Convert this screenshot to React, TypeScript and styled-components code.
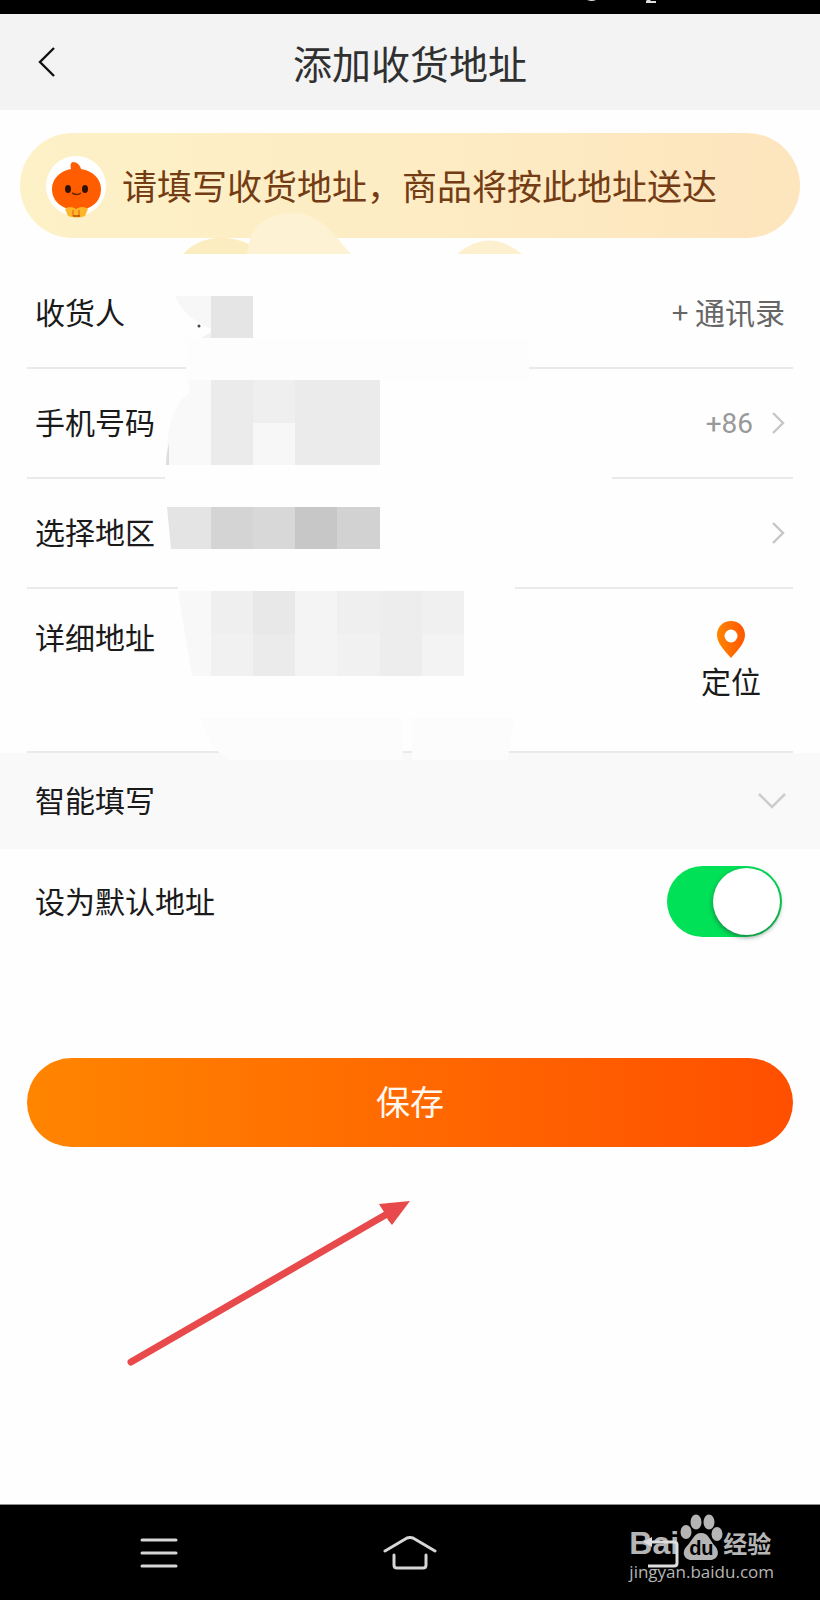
import React, { useState } from "react";
import styled, { createGlobalStyle } from "styled-components";

const GlobalStyle = createGlobalStyle`
  *, *::before, *::after { box-sizing: border-box; }
  body {
    margin: 0;
    background: #fefefe;
    color: #1a1a1a;
    font-family: "Noto Sans CJK SC", "Liberation Sans", sans-serif;
  }
  button, input { font: inherit; color: inherit; }
  svg { display: block; }
`;

const Screen = styled.div`
  display: flex;
  flex-direction: column;
  min-height: 100vh;
`;

const StatusBar = styled.div`
  display: flex;
  justify-content: flex-end;
  height: 14px;
  padding-right: 162px;
  background: #000;
`;

const Header = styled.header`
  display: grid;
  grid-template-columns: 94px 1fr 94px;
  align-items: center;
  height: 96px;
  background: #f3f3f3;
`;

const BackButton = styled.button`
  display: grid;
  place-items: center;
  height: 96px;
  padding: 0;
  border: 0;
  background: none;
`;

const Title = styled.h1`
  margin: 0;
  font-size: 39px;
  font-weight: 400;
  line-height: 56px;
  color: #303030;
  text-align: center;
  white-space: nowrap;
`;

const Main = styled.main`
  flex: 1;
`;

const Banner = styled.div`
  position: relative;
  display: flex;
  align-items: center;
  gap: 16px;
  height: 105px;
  margin: 23px 20px 0;
  padding-left: 26px;
  border-radius: 53px;
  background: linear-gradient(90deg, #fdf1c7, #fdecc4 50%, #fde5be);
`;

const BannerText = styled.p`
  position: relative;
  z-index: 1;
  margin: 0;
  padding-bottom: 2px;
  font-size: 35px;
  line-height: 50px;
  color: #743c14;
  white-space: nowrap;
`;

const Clouds = styled.svg`
  position: absolute;
  left: 160px;
  top: 78px;
`;

const Form = styled.form`
  position: relative;
  margin-top: 21px;
`;

const Row = styled.div<{ $tall?: boolean }>`
  display: flex;
  align-items: ${(p) => (p.$tall ? "flex-start" : "center")};
  height: ${(p) => (p.$tall ? 164 : 110)}px;
  margin: 0 27px;
  padding: ${(p) => (p.$tall ? "25px" : "0")} 8px 0;
  border-bottom: 2px solid #eaeaea;
`;

const Label = styled.label`
  padding-bottom: 4px;
  font-size: 30px;
  line-height: 44px;
  white-space: nowrap;
`;

const Field = styled.input`
  flex: 1;
  min-width: 0;
  height: 44px;
  margin-left: 16px;
  padding: 0;
  border: 0;
  outline: 0;
  background: transparent;
  font-size: 30px;
`;

const RowAction = styled.button<{ $raised?: boolean; $tone?: string }>`
  display: flex;
  align-items: center;
  gap: 18px;
  padding: 0 0 ${(p) => (p.$raised ? 4 : 0)}px;
  border: 0;
  background: none;
  color: ${(p) => p.$tone ?? "#666"};
  font-size: 30px;
  line-height: 44px;
  white-space: nowrap;
`;

const DialCode = styled.span`
  padding-top: 2px;
  font-family: Roboto, "Liberation Sans", sans-serif;
  font-size: 28px;
`;

const LocateButton = styled.button`
  display: flex;
  flex-direction: column;
  align-items: center;
  margin-right: 24px;
  padding: 7px 0 0;
  border: 0;
  background: none;
  font-size: 30px;
  line-height: 44px;
`;

const Mosaic = styled.svg`
  position: absolute;
  left: 0;
  top: 0;
  pointer-events: none;
`;

const SmartFill = styled.button`
  display: flex;
  align-items: center;
  justify-content: space-between;
  width: 100%;
  height: 96px;
  padding: 0 34px 0 35px;
  border: 0;
  background: #f9f9f9;
  font-size: 30px;
  line-height: 44px;
`;

const SmartFillText = styled.span`
  padding-bottom: 4px;
`;

const DefaultRow = styled.div`
  display: flex;
  align-items: center;
  justify-content: space-between;
  height: 105px;
  padding: 0 38px 0 35px;
`;

const Switch = styled.input`
  appearance: none;
  width: 115px;
  height: 71px;
  margin: 0;
  padding: 2px;
  border-radius: 36px;
  background: #00e157;

  &::before {
    content: "";
    display: block;
    width: 67px;
    height: 67px;
    margin-left: auto;
    border-radius: 50%;
    background: #fff;
    box-shadow: 0 2px 5px rgba(40, 60, 50, 0.6);
  }

  &:not(:checked) { background: #ddd; }
  &:not(:checked)::before { margin-left: 0; }
`;

const SaveButton = styled.button`
  display: block;
  width: calc(100% - 54px);
  height: 89px;
  margin: 104px 27px 0;
  padding: 0 0 4px;
  border: 0;
  border-radius: 45px;
  background: linear-gradient(90deg, #ff8500, #ff6900 50%, #ff4f00);
  color: #fff8f0;
  font-size: 34px;
  line-height: 50px;
`;

const Arrow = styled.svg`
  margin: 51px 0 40px 126px;
`;

const NavBar = styled.nav`
  position: relative;
  display: grid;
  grid-template-columns: repeat(3, 1fr);
  height: 96px;
  padding: 0 34px;
  border-top: 1px solid #8d908e;
  background: #000;
`;

const NavButton = styled.button`
  position: relative;
  z-index: 1;
  display: grid;
  place-items: center;
  padding: 0;
  border: 0;
  background: none;
`;

const Watermark = styled.div`
  position: absolute;
  right: 46px;
  top: 8px;
  color: #b5b5b5;
  pointer-events: none;
`;

const Brand = styled.div`
  display: flex;
  align-items: flex-end;
  height: 47px;
  font-family: "Liberation Sans", sans-serif;
  font-size: 32px;
  font-weight: 700;
  line-height: 34px;
`;

const Paw = styled.span`
  position: relative;
  width: 44px;
  height: 47px;
`;

const PawText = styled.span`
  position: absolute;
  left: 10px;
  top: 23px;
  color: #000;
  font-size: 20px;
  line-height: 24px;
`;

const BrandName = styled.span`
  font-family: "Noto Sans CJK SC", sans-serif;
  font-size: 24px;
  line-height: 34px;
`;

const SiteLink = styled.div`
  padding-top: 1px;
  font-family: "Open Sans", "Noto Sans", sans-serif;
  font-size: 17px;
  line-height: 22px;
  white-space: nowrap;
`;

const Chevron = () => (
  <svg width="14" height="24" viewBox="0 0 14 24" fill="none" stroke="#c6c6c6" strokeWidth="2.4">
    <path d="M2 2 12 12 2 22" />
  </svg>
);

const Mascot = () => (
  <svg width="60" height="64" viewBox="0 0 60 64">
    <ellipse cx="30" cy="32" rx="30" ry="30" fill="#fff" />
    <path d="M25 15C24 11 25 8 27 8c4 0 7 3 8 7 12 2 20 10 20 20 0 12-9 21-24 21S6 47 6 35c0-10 8-18 19-20Z" fill="#ff5d00" />
    <ellipse cx="22" cy="35" rx="3" ry="4" fill="#301200" />
    <ellipse cx="39" cy="35" rx="3" ry="4" fill="#301200" />
    <path d="M26 39q5 3 9 0" fill="none" stroke="#6d2500" strokeWidth="1.5" />
    <path d="M19 55q5-4 11 0 7-4 12 0l-3 7q-8 3-17 0Z" fill="#ffb52a" />
    <path d="M27 56v6m6-6v6" stroke="#ed7b10" strokeWidth="1.5" />
    <path d="M27 62h7" stroke="#b85000" strokeWidth="1.5" />
  </svg>
);

/* x, y, width, height, shade of each tile, in form coordinates */
const tiles: [number, number, number, number, string][] = [
  [211, 37, 42, 42, "#e5e5e5"],
  [211, 121, 42, 85, "#ebebeb"],
  [253, 121, 42, 43, "#efefef"],
  [253, 164, 42, 42, "#f7f7f7"],
  [295, 121, 85, 85, "#ebebeb"],
  [211, 248, 42, 42, "#d4d4d4"],
  [253, 248, 42, 42, "#d8d8d8"],
  [295, 248, 42, 42, "#c7c7c7"],
  [337, 248, 43, 42, "#d2d2d2"],
  [211, 332, 42, 43, "#efefef"],
  [253, 332, 42, 43, "#e8e8e8"],
  [295, 332, 42, 85, "#f4f4f4"],
  [337, 332, 43, 43, "#efefef"],
  [380, 332, 42, 85, "#ededed"],
  [422, 332, 42, 43, "#f0f0f0"],
  [211, 375, 42, 42, "#f1f1f1"],
  [253, 375, 42, 42, "#ebebeb"],
  [337, 375, 43, 42, "#f1f1f1"],
  [422, 375, 42, 42, "#f3f3f3"],
];

const Redaction = () => (
  <Mosaic width="620" height="510" viewBox="0 0 620 510" shapeRendering="crispEdges" aria-hidden="true">
    <path d="M186 79H529V121H186Z" fill="#fdfdfd" />
    <path d="M165 206H612V248H165Z" fill="#fefefe" />
    <path d="M174 290H515V332H178Z" fill="#fefefe" />
    <path d="M201 459H403V501H230Q212 495 201 459ZM412 459H514L508 501H412Z" fill="#fcfcfc" />
    <g shapeRendering="auto">
      <path d="M175 37H211V69Q187 62 175 37Z" fill="#f7f7f7" />
      <path d="M201 79 211 73V79Z" fill="#f2f2f2" />
      <circle cx="199" cy="67" r="1.5" fill="#444" />
      <path d="M188 121H211V206H166Q166 150 190 133Z" fill="#f9f9f9" />
      <path d="M166 206Q166 196 169 184L169 206Z" fill="#dedede" />
      <path d="M167 248H211V290H171Z" fill="#e4e4e4" />
      <path d="M178 332H211V417H192Z" fill="#f8f8f8" />
    </g>
    {tiles.map(([x, y, w, h, fill]) => (
      <rect key={`${x}-${y}`} x={x} y={y} width={w} height={h} fill={fill} />
    ))}
  </Mosaic>
);

export default function App() {
  const [isDefault, setIsDefault] = useState(true);
  return (
    <Screen>
      <GlobalStyle />
      <StatusBar>
        <svg width="74" height="4" viewBox="0 0 74 4" fill="#ddd">
          <path d="M3 0h9q-4 2-9 0ZM63 0h4l-1 1h6v2H62V1Z" />
        </svg>
      </StatusBar>
      <Header>
        <BackButton type="button" aria-label="返回">
          <svg width="18" height="30" viewBox="0 0 18 30" fill="none" stroke="#111" strokeWidth="2.4">
            <path d="M16 1 2 15l14 14" />
          </svg>
        </BackButton>
        <Title>添加收货地址</Title>
      </Header>
      <Main>
        <Banner>
          <Clouds width="350" height="43" viewBox="0 0 350 43">
            <path d="M3 43C20 24 48 23 69 33L75 43Z" fill="#fcedc1" />
            <path d="M63 27H72V34Q68 31 63 29Z" fill="#fefefe" />
            <path d="M67 43 70 27C76 12 92 2 113 2c29 0 41 23 58 41Z" fill="#fdf2d3" />
            <path d="M277 43q32-27 65 0Z" fill="#fdf0cf" />
          </Clouds>
          <Mascot />
          <BannerText>请填写收货地址，商品将按此地址送达</BannerText>
        </Banner>
        <Form onSubmit={(e) => e.preventDefault()}>
          <Row>
            <Label htmlFor="name">收货人</Label>
            <Field id="name" />
            <RowAction type="button" $raised>+ 通讯录</RowAction>
          </Row>
          <Row>
            <Label htmlFor="phone">手机号码</Label>
            <Field id="phone" type="tel" />
            <RowAction type="button" $tone="#999">
              <DialCode>+86</DialCode>
              <Chevron />
            </RowAction>
          </Row>
          <Row>
            <Label htmlFor="region">选择地区</Label>
            <Field id="region" />
            <RowAction type="button" aria-label="选择地区">
              <Chevron />
            </RowAction>
          </Row>
          <Row $tall>
            <Label htmlFor="address">详细地址</Label>
            <Field id="address" />
            <LocateButton type="button">
              <svg width="28" height="37" viewBox="0 0 28 37">
                <defs>
                  <linearGradient id="pin" x1="0" x2="1">
                    <stop stopColor="#ff8500" />
                    <stop offset="1" stopColor="#ff5500" />
                  </linearGradient>
                </defs>
                <path
                  fill="url(#pin)"
                  fillRule="evenodd"
                  d="M14 0C6 0 0 6 0 14c0 8 7 15 14 23 7-8 14-15 14-23C28 6 22 0 14 0Zm0 8.500a6.500 6.500 0 1 1 0 13 6.500 6.500 0 0 1 0-13Z"
                />
              </svg>
              定位
            </LocateButton>
          </Row>
          <SmartFill type="button">
            <SmartFillText>智能填写</SmartFillText>
            <svg width="28" height="16" viewBox="0 0 28 16" fill="none" stroke="#cdcdcd" strokeWidth="2.6">
              <path d="M1 1 14 14 27 1" />
            </svg>
          </SmartFill>
          <DefaultRow>
            <Label htmlFor="default">设为默认地址</Label>
            <Switch
              id="default"
              type="checkbox"
              role="switch"
              checked={isDefault}
              onChange={(e) => setIsDefault(e.target.checked)}
            />
          </DefaultRow>
          <SaveButton type="submit">保存</SaveButton>
          <Redaction />
        </Form>
        <Arrow width="288" height="172" viewBox="0 0 288 172" aria-hidden="true">
          <path d="M5 164 261 16" stroke="#e84a4b" strokeWidth="7" strokeLinecap="round" />
          <path d="M284 3 253 6 258 14 262 22 266 27Z" fill="#e84a4b" />
        </Arrow>
      </Main>
      <NavBar>
        <NavButton type="button" aria-label="菜单">
          <svg width="38" height="30" viewBox="0 0 38 30" stroke="#d6d6d6" strokeWidth="3" strokeLinecap="round">
            <path d="M2 2h34M2 15h34M2 28h34" />
          </svg>
        </NavButton>
        <NavButton type="button" aria-label="主页">
          <svg width="54" height="34" viewBox="0 0 54 34" fill="none" stroke="#d6d6d6" strokeWidth="3" strokeLinecap="round" strokeLinejoin="round">
            <path d="M2 15 24 2q3-1 6 0l22 13M11 19v10q0 3 3 3h26q3 0 3-3V19" />
          </svg>
        </NavButton>
        <NavButton type="button" aria-label="后退">
          <svg width="36" height="32" viewBox="0 0 36 32" fill="none" stroke="#dedede" strokeWidth="3">
            <path d="M6 5h25q3 0 3 3v18q0 3-3 3H5" />
            <path d="M0 5 9 0v10Z" fill="#dedede" stroke="none" />
          </svg>
        </NavButton>
        <Watermark>
          <Brand>
            Bai
            <Paw>
              <svg width="44" height="47" viewBox="0 0 44 47" fill="#b5b5b5">
                <ellipse cx="7" cy="19" rx="5.500" ry="7" />
                <ellipse cx="17" cy="9" rx="5.500" ry="7.500" />
                <ellipse cx="30" cy="9" rx="5.500" ry="7.500" />
                <ellipse cx="38" cy="21" rx="5.500" ry="7" />
                <path d="M22 20c8 0 9 8 14 13 6 7 2 14-5 14H13c-8 0-11-8-5-14 5-5 7-13 14-13Z" />
              </svg>
              <PawText>du</PawText>
            </Paw>
            <BrandName>经验</BrandName>
          </Brand>
          <SiteLink>jingyan.baidu.com</SiteLink>
        </Watermark>
      </NavBar>
    </Screen>
  );
}
